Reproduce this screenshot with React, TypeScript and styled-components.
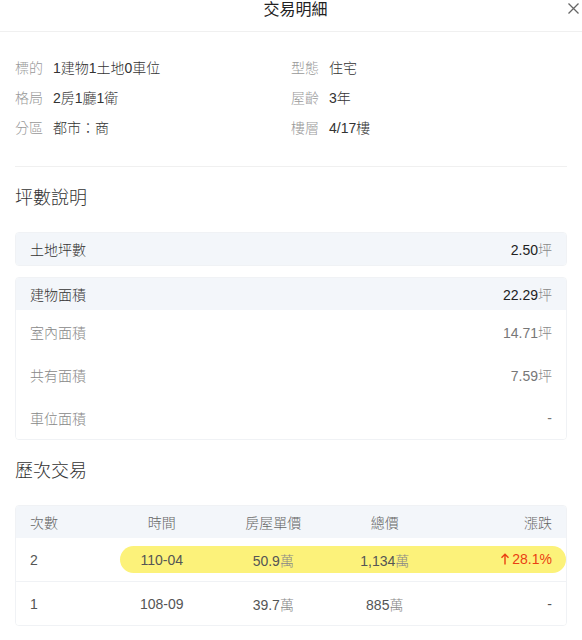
import React from "react"
import styled, { createGlobalStyle } from "styled-components"

const GlobalStyle = createGlobalStyle`
  body {
    margin: 0;
    background: #fff;
    font-family: "Liberation Sans", "Noto Sans CJK TC", sans-serif;
    font-weight: 300;
    color: #333;
  }
`

const Header = styled.div`
  position: relative;
  height: 32px;
  border-bottom: 1px solid #f0f0f0;
  box-sizing: border-box;
  text-align: center;
  padding-left: 9px;
`

const Title = styled.h1`
  margin: 0;
  font-size: 16px;
  font-weight: 400;
  line-height: 19px;
  color: #222;
`

const Close = styled.button`
  position: absolute;
  top: 3px;
  right: 3px;
  width: 11px;
  height: 11px;
  padding: 0;
  border: 0;
  background: none;
  display: flex;
  cursor: pointer;
`

const Body = styled.div`
  padding: 0 15px 12px;
`

const InfoGrid = styled.div`
  display: grid;
  grid-template-columns: 1fr 1fr;
  padding: 21px 0 23px;
  border-bottom: 1px solid #f0f0f0;
  font-size: 14px;
  line-height: 30px;
`

const InfoItem = styled.div`
  display: flex;
  gap: 10px;
`

const InfoLabel = styled.span`
  color: #999;
`

const InfoValue = styled.span`
  color: #333;
`

const SectionTitle = styled.h2`
  margin: 17px 0 20px;
  font-size: 18px;
  font-weight: 300;
  line-height: 28px;
  color: #333;
`

const Card = styled.div<{ $gap?: boolean }>`
  border: 1px solid #f0f2f5;
  border-radius: 4px;
  overflow: hidden;
  margin-bottom: ${(p) => (p.$gap ? "11px" : "0")};
  font-size: 14px;
`

const AreaRow = styled.div<{ $head?: boolean }>`
  display: flex;
  justify-content: space-between;
  align-items: center;
  padding: 0 14px;
  height: ${(p) => (p.$head ? "32px" : "43px")};
  background: ${(p) => (p.$head ? "#f3f6fa" : "#fff")};
  color: ${(p) => (p.$head ? "#333" : "#888")};
`

const AreaValue = styled.span<{ $head?: boolean }>`
  color: ${(p) => (p.$head ? "#222" : "#777")};
`

const Unit = styled.span`
  color: #888;
`

const TableRow = styled.div<{ $head?: boolean; $last?: boolean }>`
  position: relative;
  display: grid;
  grid-template-columns: 76px repeat(4, 1fr);
  align-items: center;
  padding: 0 14px;
  height: ${(p) => (p.$head ? "32px" : "43px")};
  background: ${(p) => (p.$head ? "#f3f6fa" : "#fff")};
  border-bottom: ${(p) => (p.$head || p.$last ? "0" : "1px solid #f0f2f5")};
  color: ${(p) => (p.$head ? "#666" : "#555")};
`

const Highlight = styled.div`
  position: absolute;
  left: 104px;
  right: 0;
  top: 8px;
  bottom: 8px;
  border-radius: 14px;
  background: #fcf27a;
`

const Cell = styled.span<{ $align?: "left" | "center" | "right" }>`
  position: relative;
  text-align: ${(p) => p.$align || "center"};
`

const Rise = styled.span`
  color: #ea3f12;
  display: inline-flex;
  align-items: center;
  gap: 2px;
`

const UpArrow = () => (
  <svg width="10" height="12" viewBox="0 0 10 12" fill="none" stroke="#ea3f12" strokeWidth="1.4">
    <path d="M5 11.5V1.2M1.5 4.7L5 1.2l3.5 3.5" />
  </svg>
)

const info = [
  ["標的", "1建物1土地0車位", "型態", "住宅"],
  ["格局", "2房1廳1衛", "屋齡", "3年"],
  ["分區", "都市：商", "樓層", "4/17樓"],
]

const areas = [
  ["室內面積", "14.71"],
  ["共有面積", "7.59"],
  ["車位面積", ""],
]

const trades = [
  { n: "2", time: "110-04", unit: "50.9", total: "1,134", rise: "28.1%" },
  { n: "1", time: "108-09", unit: "39.7", total: "885", rise: "" },
]

export default function App() {
  return (
    <>
      <GlobalStyle />
      <Header>
        <Title>交易明細</Title>
        <Close aria-label="close">
          <svg width="11" height="11" viewBox="0 0 11 11" stroke="#666" strokeWidth="1.3">
            <path d="M0.5 0.5l10 10M10.5 0.5l-10 10" />
          </svg>
        </Close>
      </Header>
      <Body>
        <InfoGrid>
          {info.map((r) => (
            <React.Fragment key={r[0]}>
              <InfoItem>
                <InfoLabel>{r[0]}</InfoLabel>
                <InfoValue>{r[1]}</InfoValue>
              </InfoItem>
              <InfoItem>
                <InfoLabel>{r[2]}</InfoLabel>
                <InfoValue>{r[3]}</InfoValue>
              </InfoItem>
            </React.Fragment>
          ))}
        </InfoGrid>

        <SectionTitle>坪數說明</SectionTitle>
        <Card $gap>
          <AreaRow $head>
            <span>土地坪數</span>
            <AreaValue $head>
              2.50<Unit>坪</Unit>
            </AreaValue>
          </AreaRow>
        </Card>
        <Card>
          <AreaRow $head>
            <span>建物面積</span>
            <AreaValue $head>
              22.29<Unit>坪</Unit>
            </AreaValue>
          </AreaRow>
          {areas.map(([label, v]) => (
            <AreaRow key={label}>
              <span>{label}</span>
              <AreaValue>
                {v ? (
                  <>
                    {v}
                    <Unit>坪</Unit>
                  </>
                ) : (
                  "-"
                )}
              </AreaValue>
            </AreaRow>
          ))}
        </Card>

        <SectionTitle>歷次交易</SectionTitle>
        <Card>
          <TableRow $head>
            <Cell $align="left">次數</Cell>
            <Cell>時間</Cell>
            <Cell>房屋單價</Cell>
            <Cell>總價</Cell>
            <Cell $align="right">漲跌</Cell>
          </TableRow>
          {trades.map((t, i) => (
            <TableRow key={t.n} $last={i === trades.length - 1}>
              {t.rise && <Highlight />}
              <Cell $align="left">{t.n}</Cell>
              <Cell>{t.time}</Cell>
              <Cell>
                {t.unit}
                <Unit>萬</Unit>
              </Cell>
              <Cell>
                {t.total}
                <Unit>萬</Unit>
              </Cell>
              <Cell $align="right">
                {t.rise ? (
                  <Rise>
                    <UpArrow />
                    {t.rise}
                  </Rise>
                ) : (
                  "-"
                )}
              </Cell>
            </TableRow>
          ))}
        </Card>
      </Body>
    </>
  )
}
